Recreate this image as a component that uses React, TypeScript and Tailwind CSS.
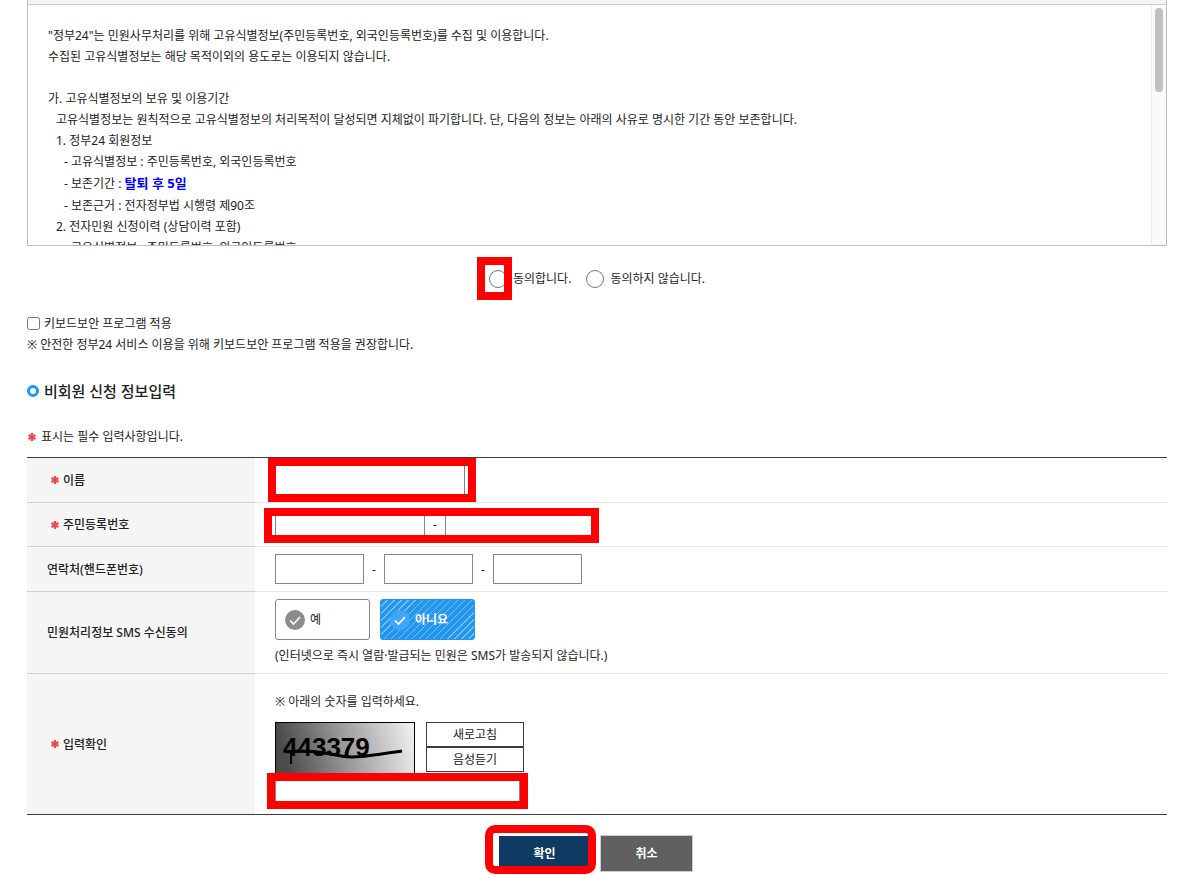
import type { ReactNode } from "react";
import clsx from "clsx";

const FIELD = "border border-[#868686] bg-white px-2 outline-none";

const TERMS = [
  { text: '"정부24"는 민원사무처리를 위해 고유식별정보(주민등록번호, 외국인등록번호)를 수집 및 이용합니다.', indent: "" },
  { text: "수집된 고유식별정보는 해당 목적이외의 용도로는 이용되지 않습니다.", indent: "" },
  { text: "", indent: "" },
  { text: "가. 고유식별정보의 보유 및 이용기간", indent: "" },
  {
    text: "고유식별정보는 원칙적으로 고유식별정보의 처리목적이 달성되면 지체없이 파기합니다. 단, 다음의 정보는 아래의 사유로 명시한 기간 동안 보존합니다.",
    indent: "pl-2",
  },
  { text: "1. 정부24 회원정보", indent: "pl-2" },
  { text: "- 고유식별정보 : 주민등록번호, 외국인등록번호", indent: "pl-4" },
  { text: "- 보존기간 : ", strong: "탈퇴 후 5일", indent: "pl-4" },
  { text: "- 보존근거 : 전자정부법 시행령 제90조", indent: "pl-4" },
  { text: "2. 전자민원 신청이력 (상담이력 포함)", indent: "pl-2" },
  { text: "- 고유식별정보 : 주민등록번호, 외국인등록번호", indent: "pl-4" },
];

const Highlight = ({ className }: { className: string }) => (
  <span aria-hidden="true" className={clsx("pointer-events-none absolute border-8 border-[#ff0000]", className)} />
);

const Star = () => (
  <svg viewBox="0 0 8 8" className="size-2 shrink-0" stroke="#ef4850" strokeWidth="2.3" aria-hidden="true">
    <path d="M4 0v8M0.5 2l7 4M7.5 2l-7 4" />
  </svg>
);

const CheckCircle = ({ fill }: { fill: string }) => (
  <svg viewBox="0 0 20 20" className="size-5" aria-hidden="true">
    <circle cx="10" cy="10" r="10" fill={fill} />
    <path d="M5 10.5l3.5 3.5 6.5-7" fill="none" stroke="#fff" strokeWidth="1.7" />
  </svg>
);

const Dash = () => <span className="w-5 text-center">-</span>;

type RowProps = {
  label: string;
  htmlFor?: string;
  required?: boolean;
  last?: boolean;
  className?: string;
  children: ReactNode;
};

const Row = ({ label, htmlFor, required, last, className = "py-[7px]", children }: RowProps) => (
  <tr>
    <th
      scope="row"
      className={clsx(
        "w-[228px] border-b bg-[#f5f5f5] pl-5 text-left align-middle font-medium",
        last ? "border-[#3c3c3c]" : "border-[#d2d2d2]",
      )}
    >
      <span className={clsx("flex items-center gap-1", required && "pl-1")}>
        {required && <Star />}
        {htmlFor ? <label htmlFor={htmlFor}>{label}</label> : label}
      </span>
    </th>
    <td className={clsx("border-b pl-5", last ? "border-[#3c3c3c]" : "border-[#e6e6e6]", className)}>{children}</td>
  </tr>
);

const Terms = () => (
  <section className="border-x border-b border-[#bcbcbc]">
    <div className="h-[5px] border-b border-[#ccc] bg-[#f4f4f4]" />
    <div className="flex h-60">
      <div className="min-w-0 flex-1 overflow-hidden px-5 pt-5">
        {TERMS.map((line, i) => (
          <p key={i} className={clsx("whitespace-nowrap", line.strong ? "h-[23px] leading-[23px]" : "h-[21px]", line.indent)}>
            {line.text}
            {line.strong && <strong className="text-[13px] text-[#0000ff]">{line.strong}</strong>}
          </p>
        ))}
      </div>
      <div className="w-[15px] border-l border-[#e8e8e8] bg-[#fafafa] px-[3px] py-[3px]">
        <div className="h-[84px] w-2 rounded-full bg-[#c1c1c1]" />
      </div>
    </div>
  </section>
);

const Captcha = () => (
  <svg viewBox="0 0 140 51" className="h-[51px] w-[140px]" role="img" aria-label="443379">
    <defs>
      <linearGradient id="captcha" x1="0" y1="0.1" x2="1" y2="0">
        <stop offset="0" stopColor="#4a4a4a" />
        <stop offset="0.5" stopColor="#a3a0a1" />
        <stop offset="1" stopColor="#f4f3f4" />
      </linearGradient>
    </defs>
    <rect x="0.5" y="0.5" width="139" height="52" fill="url(#captcha)" stroke="#000" />
    <text x="8" y="34" fontSize="26" fontWeight="700" fontFamily="'Liberation Sans', sans-serif">
      443379
    </text>
    <path d="M16 31v11" stroke="#000" strokeWidth="2" />
    <path d="M12 30c22-3 38 1 54 4s38-2 61-5" fill="none" stroke="#000" strokeWidth="3" />
  </svg>
);

export default function App() {
  return (
    <main className="bg-white pr-7 pb-2 pl-[27px] font-['Noto_Sans','Noto_Sans_CJK_KR',sans-serif] text-[12px] leading-[21px] text-[#222]">
      <Terms />

      <form onSubmit={(e) => e.preventDefault()}>
        <div className="mt-[22px] flex justify-center gap-[15px]">
          <label className="flex items-center gap-1.5">
            <span className="relative flex">
              <input type="radio" name="agree" className="size-[18px]" />
              <Highlight className="-top-[13px] -right-[5px] -bottom-3 -left-3" />
            </span>
            동의합니다.
          </label>
          <label className="flex items-center gap-1.5">
            <input type="radio" name="agree" className="size-[18px]" />
            동의하지 않습니다.
          </label>
        </div>

        <label className="mt-6 flex items-center gap-1">
          <input type="checkbox" className="size-[13px]" />
          키보드보안 프로그램 적용
        </label>
        <p>※ 안전한 정부24 서비스 이용을 위해 키보드보안 프로그램 적용을 권장합니다.</p>

        <h2 className="mt-6 flex items-center gap-[5px] text-[15px] leading-6 font-medium">
          <span className="size-3 rounded-full border-[3px] border-[#2196f3]" />
          비회원 신청 정보입력
        </h2>

        <p className="mt-[23px] flex items-center gap-[5px] pl-px">
          <Star />
          표시는 필수 입력사항입니다.
        </p>

        <table className="mt-2.5 w-full border-separate border-spacing-0 border-t border-[#3c3c3c]">
          <tbody>
            <Row label="이름" htmlFor="name" required>
              <span className="relative flex w-[190px]">
                <input id="name" type="text" className={clsx(FIELD, "h-[30px] w-full")} />
                <Highlight className="-top-[7px] -right-[11px] -bottom-[7px] -left-[7px]" />
              </span>
            </Row>
            <Row label="주민등록번호" htmlFor="rrn" required>
              <span className="relative flex w-[320px] items-center">
                <input id="rrn" type="text" className={clsx(FIELD, "h-[29px] w-[150px]")} />
                <Dash />
                <input type="password" aria-label="주민등록번호 뒷자리" className={clsx(FIELD, "h-[29px] w-[150px]")} />
                <Highlight className="-top-0.5 -right-1 -bottom-1 -left-[11px]" />
              </span>
            </Row>
            <Row label="연락처(핸드폰번호)" htmlFor="phone">
              <span className="flex items-center">
                <input id="phone" type="text" className={clsx(FIELD, "h-[30px] w-[89px]")} />
                <Dash />
                <input type="text" aria-label="가운데 번호" className={clsx(FIELD, "h-[30px] w-[89px]")} />
                <Dash />
                <input type="text" aria-label="끝 번호" className={clsx(FIELD, "h-[30px] w-[89px]")} />
              </span>
            </Row>
            <Row label="민원처리정보 SMS 수신동의">
              <div className="flex gap-2.5">
                <label className="relative flex h-[41px] w-[95px] items-center gap-[5px] rounded-[3px] border border-[#868686] pl-[9px]">
                  <input type="radio" name="sms" className="sr-only" />
                  <CheckCircle fill="#8c8c8c" />
                  예
                </label>
                <label className="relative flex h-[41px] w-[95px] items-center gap-[5px] rounded-[3px] border border-[#2196f3] bg-[#2196f3] bg-[repeating-linear-gradient(135deg,#2196f3_0_4px,#7cc0f7_4px_5px)] pl-[9px] font-bold text-white">
                  <input type="radio" name="sms" className="sr-only" defaultChecked />
                  <CheckCircle fill="#42a5f9" />
                  아니요
                </label>
              </div>
              <p className="mt-[5px]">(인터넷으로 즉시 열람·발급되는 민원은 SMS가 발송되지 않습니다.)</p>
            </Row>
            <Row label="입력확인" htmlFor="answer" required last className="pt-[17px] pb-2">
              <p>※ 아래의 숫자를 입력하세요.</p>
              <div className="mt-2.5 flex gap-[11px]">
                <Captcha />
                <div className="flex w-[98px] flex-col">
                  <button type="button" className="h-[25px] border border-[#3c3c3c] text-center">
                    새로고침
                  </button>
                  <button type="button" className="h-[25px] border border-[#3c3c3c] text-center">
                    음성듣기
                  </button>
                </div>
              </div>
              <span className="relative mt-[3px] flex w-[245px]">
                <input id="answer" type="text" className={clsx(FIELD, "h-[30px] w-full")} />
                <Highlight className="-top-[3px] -right-2 -bottom-[3px] -left-2" />
              </span>
            </Row>
          </tbody>
        </table>

        <div className="mt-5 flex justify-center gap-[9px] pr-[3px] font-bold text-white">
          <span className="relative flex">
            <button type="submit" className="h-[37px] w-[93px] border border-white bg-[#0f3a63]">
              확인
            </button>
            <Highlight className="-top-2.5 -right-[5px] -bottom-0.5 -left-[13px] rounded-[10px]" />
          </span>
          <button type="button" className="h-[37px] w-[93px] border border-[#ccc] bg-[#606060]">
            취소
          </button>
        </div>
      </form>
    </main>
  );
}
